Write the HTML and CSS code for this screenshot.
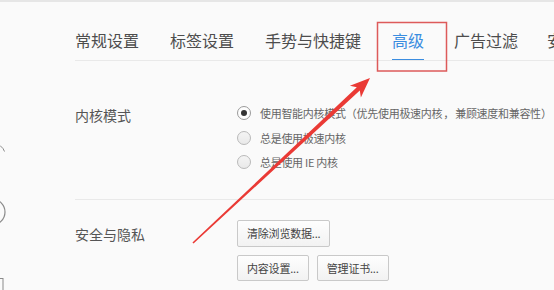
FILE: index.html
```html
<!DOCTYPE html>
<html lang="zh-CN">
<head>
<meta charset="utf-8">
<title>高级设置</title>
<link rel="stylesheet" href="styles.css">
</head>
<body>
<div class="topstrip"></div>
<div class="page">
  <aside class="sidebar">
    <svg width="6" height="288" viewBox="0 2 6 288" class="side-svg">
      <path d="M0 145.5 L3 148.5 L4.5 151.5" fill="none" stroke="#8a8a8a" stroke-width="1"/>
      <circle cx="-8" cy="212" r="13" fill="none" stroke="#8a8a8a" stroke-width="1.2"/>
      <rect x="-10" y="278.5" width="13" height="20" fill="none" stroke="#8a8a8a" stroke-width="1"/>
    </svg>
  </aside>
  <main class="content">
    <nav class="tabs">
      <span class="tab">常规设置</span>
      <span class="tab">标签设置</span>
      <span class="tab">手势与快捷键</span>
      <span class="tab active">高级</span>
      <span class="tab">广告过滤</span>
      <span class="tab">安全</span>
    </nav>

    <section class="section sec-kernel">
      <div class="label">内核模式</div>
      <div class="controls">
        <div class="radio-row"><span class="radio checked"></span><span class="rtext">使用智能内核模式<span class="pw">（</span>优先使用极速内核<span class="pw comma">，</span>兼顾速度和兼容性<span class="pw">）</span></span></div>
        <div class="radio-row"><span class="radio"></span><span class="rtext">总是使用极速内核</span></div>
        <div class="radio-row"><span class="radio"></span><span class="rtext">总是使用 IE 内核</span></div>
      </div>
    </section>

    <section class="section sec-privacy">
      <div class="label label-btn">安全与隐私</div>
      <div class="controls">
        <div class="btn-row"><button class="btn tall">清除浏览数据...</button></div>
        <div class="btn-row"><button class="btn">内容设置...</button><button class="btn">管理证书...</button></div>
      </div>
    </section>
  </main>
</div>

<svg class="annot" width="554" height="290" viewBox="0 0 554 290">
  <rect x="377.5" y="22.5" width="69" height="48.5" fill="none" stroke="#dd5a5a" stroke-width="1.5"/>
  <polygon points="192.45,242.42 356.8,87.3 349.9,85.8 370,78 360.9,97.4 359.8,90.5 193.55,243.58" fill="#ea3a35"/>
</svg>
</body>
</html>
```
FILE: styles.css
```css
html, body {
  margin: 0;
  padding: 0;
}
body {
  width: 554px;
  height: 290px;
  overflow: hidden;
  background: #fafafa;
  font-family: "Noto Sans CJK SC", "Liberation Sans", sans-serif;
  color: #555;
  position: relative;
}
.topstrip {
  height: 2px;
  background: #e6e6e6;
}
.page {
  display: flex;
}
.sidebar {
  width: 6px;
  flex: none;
}
.side-svg {
  display: block;
}
.content {
  margin-left: 69px;
  flex: 1;
  min-width: 0;
}
.tabs {
  display: flex;
  align-items: flex-end;
  padding-top: 27px;
  border-bottom: 1px solid #e9e9e9;
  white-space: nowrap;
  overflow: hidden;
}
.tab {
  font-size: 16px;
  line-height: 22px;
  padding-bottom: 8px;
  border-bottom: 2px solid transparent;
  margin-bottom: -1px;
  margin-right: 31px;
  color: #4d4d4d;
  flex: none;
}
.tab:nth-child(4) {
  margin-right: 30px;
}
.tab:nth-child(5) {
  margin-right: 29px;
}
.tab.active {
  color: #3b8de0;
  border-bottom-color: #3b8de0;
}
.section {
  display: flex;
}
.label {
  width: 162px;
  flex: none;
  font-size: 14px;
  line-height: 24px;
  color: #555;
}
.sec-kernel {
  padding-top: 40px;
  padding-bottom: 24px;
  border-bottom: 1px solid #e9e9e9;
}
.sec-kernel .label {
  padding-top: 2px;
}
.radio-row {
  display: flex;
  align-items: center;
  height: 24.5px;
}
.radio {
  width: 12px;
  height: 12px;
  border: 1px solid #b9b9b9;
  border-radius: 50%;
  background: linear-gradient(#f4f4f4, #e9e9e9);
  margin-right: 9px;
  flex: none;
  display: flex;
  align-items: center;
  justify-content: center;
}
.radio.checked {
  background: #fdfdfd;
  border-color: #9a9a9a;
}
.radio.checked::before {
  content: "";
  width: 6px;
  height: 6px;
  border-radius: 50%;
  background: #333;
}
.rtext {
  font-size: 11px;
  letter-spacing: -0.3px;
  color: #666;
  white-space: nowrap;
}
.pw {
  display: inline-block;
  width: 11px;
  text-align: center;
}
.pw.comma {
  width: 13px;
}
.sec-privacy {
  padding-top: 20px;
}
.label-btn {
  line-height: 27px;
  padding-top: 1px;
}
.btn-row {
  display: flex;
  gap: 8px;
  margin-bottom: 8px;
}
.btn {
  font-family: "Noto Sans CJK SC", "Liberation Sans", sans-serif;
  font-size: 11px;
  letter-spacing: -0.2px;
  color: #444;
  height: 26px;
  padding: 0 9px;
  border: 1px solid #c9c9c9;
  border-radius: 2px;
  background: linear-gradient(#fefefe, #f2f2f2);
  line-height: 24px;
}
.btn.tall {
  height: 27px;
}
.annot {
  position: absolute;
  left: 0;
  top: 0;
  pointer-events: none;
}
```
